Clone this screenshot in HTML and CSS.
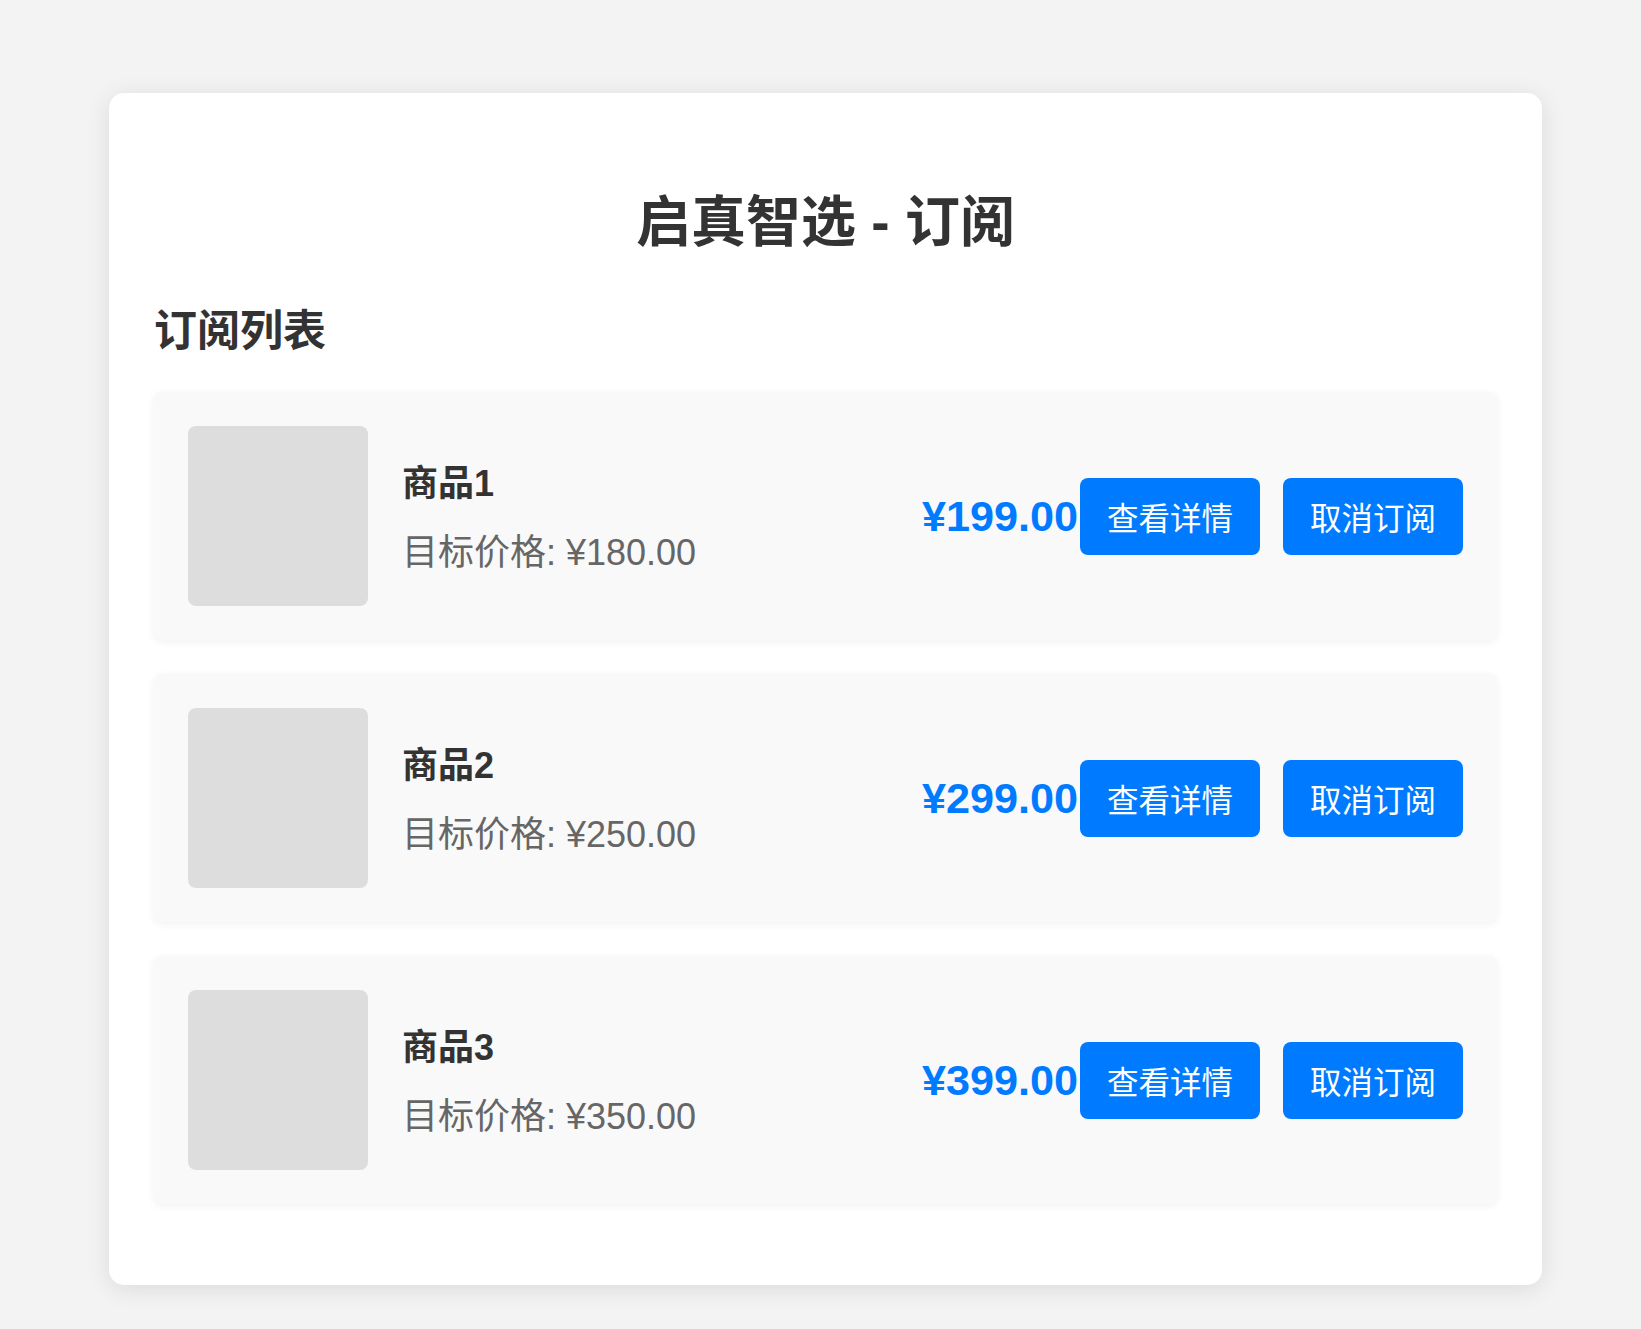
FILE: index.html
```html
<!DOCTYPE html>
<html lang="zh-CN">
<head>
<meta charset="UTF-8">
<title>启真智选 - 订阅</title>
<link rel="stylesheet" href="styles.css">
</head>
<body>
<div class="container">
  <h1 class="title">启真智选 - 订阅</h1>
  <h2 class="section-title">订阅列表</h2>
  <div class="list">
    <div class="item">
      <div class="thumb"></div>
      <div class="info">
        <div class="name">商品1</div>
        <div class="target">目标价格: ¥180.00</div>
      </div>
      <div class="price">¥199.00</div>
      <button class="btn">查看详情</button>
      <button class="btn btn-second">取消订阅</button>
    </div>
    <div class="item">
      <div class="thumb"></div>
      <div class="info">
        <div class="name">商品2</div>
        <div class="target">目标价格: ¥250.00</div>
      </div>
      <div class="price">¥299.00</div>
      <button class="btn">查看详情</button>
      <button class="btn btn-second">取消订阅</button>
    </div>
    <div class="item">
      <div class="thumb"></div>
      <div class="info">
        <div class="name">商品3</div>
        <div class="target">目标价格: ¥350.00</div>
      </div>
      <div class="price">¥399.00</div>
      <button class="btn">查看详情</button>
      <button class="btn btn-second">取消订阅</button>
    </div>
  </div>
</div>
</body>
</html>
```

FILE: styles.css
```css
html, body {
  margin: 0;
  padding: 0;
}
body {
  background: #f3f3f3;
  font-family: "Liberation Sans", Arial, "Noto Sans CJK SC", sans-serif;
  color: #333;
  padding: 93px 99px 44px 109px;
}
.container {
  background: #fff;
  border-radius: 15px;
  padding: 45px 45px 47px;
  box-shadow: 0 4px 24px rgba(0, 0, 0, 0.1);
}
.title {
  margin: 44px 0 0;
  font-size: 55px;
  line-height: 80px;
  font-weight: bold;
  text-align: center;
  color: #333;
}
.section-title {
  margin: 37px 0 31px;
  padding-top: 2px;
  font-size: 43px;
  line-height: 60px;
  font-weight: bold;
  color: #333;
}
.list {
  display: flex;
  flex-direction: column;
}
.item {
  display: flex;
  align-items: center;
  padding: 34px;
  margin-bottom: 34px;
  background: #f9f9f9;
  border-radius: 8px;
  box-shadow: 0 2px 8px rgba(0, 0, 0, 0.06);
}
.thumb {
  width: 180px;
  height: 180px;
  flex: none;
  background: #ddd;
  border-radius: 8px;
  margin-right: 34px;
}
.info {
  flex: 1;
  padding-top: 5px;
}
.name {
  font-size: 36px;
  line-height: 42px;
  font-weight: bold;
  color: #333;
  margin-bottom: 27px;
}
.target {
  font-size: 36px;
  line-height: 42px;
  color: #666;
}
.price {
  font-size: 43.2px;
  font-weight: bold;
  color: #007bff;
  margin-right: 2px;
}
.btn {
  width: 180px;
  height: 77px;
  padding: 0;
  border: none;
  border-radius: 8px;
  background: #007bff;
  color: #fff;
  font-family: "Liberation Sans", Arial, "Noto Sans CJK SC", sans-serif;
  font-size: 31.5px;
}
.btn-second {
  margin-left: 23px;
}
```
